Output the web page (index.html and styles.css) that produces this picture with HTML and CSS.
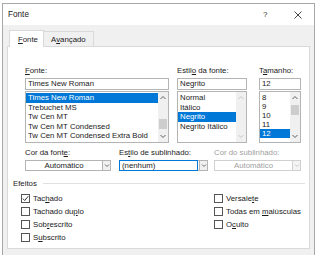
FILE: index.html
```html
<!DOCTYPE html>
<html>
<head>
<meta charset="utf-8">
<link rel="stylesheet" href="styles.css">
</head>
<body>
<div class="dialog">
  <div class="titlebar">
    <span class="title">Fonte</span>
    <span class="help">?</span>
    <svg class="close" width="8" height="8" viewBox="0 0 8 8"><path d="M0.5 0.5 L7.5 7.5 M7.5 0.5 L0.5 7.5" stroke="#333" stroke-width="0.9" fill="none"/></svg>
  </div>
  <div class="body">
    <div class="tabs">
      <div class="tab active"><u>F</u>onte</div>
      <div class="tab">A<u>v</u>ançado</div>
    </div>
    <div class="panel">
      <div class="row1">
        <div class="col col-font">
          <div class="label"><u>F</u>onte:</div>
          <div class="edit">Times New Roman</div>
          <div class="list">
            <div class="items">
              <div class="item sel">Times New Roman</div>
              <div class="item">Trebuchet MS</div>
              <div class="item">Tw Cen MT</div>
              <div class="item">Tw Cen MT Condensed</div>
              <div class="item">Tw Cen MT Condensed Extra Bold</div>
            </div>
            <div class="sbar">
              <svg class="arr" width="10" height="9" viewBox="0 0 10 9"><path d="M2.5 6 L5 3.5 L7.5 6" stroke="#606060" fill="none"/></svg>
              <span class="track"><span class="thumb thumb-font"></span></span>
              <svg class="arr" width="10" height="9" viewBox="0 0 10 9"><path d="M2.5 3 L5 5.5 L7.5 3" stroke="#606060" fill="none"/></svg>
            </div>
          </div>
        </div>
        <div class="col col-style">
          <div class="label">Estil<u>o</u> da fonte:</div>
          <div class="edit">Negrito</div>
          <div class="list">
            <div class="items">
              <div class="item">Normal</div>
              <div class="item">Itálico</div>
              <div class="item sel">Negrito</div>
              <div class="item">Negrito Itálico</div>
            </div>
            <div class="sbar">
              <svg class="arr" width="10" height="9" viewBox="0 0 10 9"><path d="M2.5 6 L5 3.5 L7.5 6" stroke="#c8c8c8" fill="none"/></svg>
              <span class="track"></span>
              <svg class="arr" width="10" height="9" viewBox="0 0 10 9"><path d="M2.5 3 L5 5.5 L7.5 3" stroke="#c8c8c8" fill="none"/></svg>
            </div>
          </div>
        </div>
        <div class="col col-size">
          <div class="label">T<u>a</u>manho:</div>
          <div class="edit">12</div>
          <div class="list">
            <div class="items tight">
              <div class="item">8</div>
              <div class="item">9</div>
              <div class="item">10</div>
              <div class="item">11</div>
              <div class="item sel">12</div>
            </div>
            <div class="sbar">
              <svg class="arr" width="10" height="9" viewBox="0 0 10 9"><path d="M2.5 6 L5 3.5 L7.5 6" stroke="#606060" fill="none"/></svg>
              <span class="track"><span class="thumb thumb-size"></span></span>
              <svg class="arr" width="10" height="9" viewBox="0 0 10 9"><path d="M2.5 3 L5 5.5 L7.5 3" stroke="#606060" fill="none"/></svg>
            </div>
          </div>
        </div>
      </div>
      <div class="row2">
        <div class="col2 c-color">
          <div class="label">Cor da font<u>e</u>:</div>
          <div class="combo">
            <span class="cval center">Automático</span>
            <span class="cbtn"><svg width="8" height="9" viewBox="0 0 8 9"><path d="M2 3.5 L4 5.5 L6 3.5" stroke="#707070" fill="none"/></svg></span>
          </div>
        </div>
        <div class="col2 c-under">
          <div class="label">Es<u>t</u>ilo de sublinhado:</div>
          <div class="combo focus">
            <span class="cval">(nenhum)</span>
            <span class="cbtn"><svg width="8" height="9" viewBox="0 0 8 9"><path d="M2 3.5 L4 5.5 L6 3.5" stroke="#707070" fill="none"/></svg></span>
          </div>
        </div>
        <div class="col2 c-ucolor disabled">
          <div class="label">Cor do sublinhado:</div>
          <div class="combo">
            <span class="cval center">Automático</span>
            <span class="cbtn"><svg width="8" height="9" viewBox="0 0 8 9"><path d="M2 3.5 L4 5.5 L6 3.5" stroke="#c8c8c8" fill="none"/></svg></span>
          </div>
        </div>
      </div>
      <div class="effects-head">
        <span>Efeitos</span>
        <span class="rule"></span>
      </div>
      <div class="effects">
        <div class="ecol ecol1">
          <div class="chk"><span class="box"><svg width="7" height="7" viewBox="0 0 7 7"><path d="M0.8 3.6 L2.7 5.5 L6.3 1.2" stroke="#333" stroke-width="1" fill="none"/></svg></span><span>Tac<u>h</u>ado</span></div>
          <div class="chk"><span class="box"></span><span>Tachado du<u>p</u>lo</span></div>
          <div class="chk"><span class="box"></span><span>Sob<u>r</u>escrito</span></div>
          <div class="chk"><span class="box"></span><span>S<u>u</u>bscrito</span></div>
        </div>
        <div class="ecol ecol2">
          <div class="chk"><span class="box"></span><span>Versale<u>t</u>e</span></div>
          <div class="chk"><span class="box"></span><span>Todas em <u>m</u>aiúsculas</span></div>
          <div class="chk"><span class="box"></span><span>O<u>c</u>ulto</span></div>
        </div>
      </div>
    </div>
  </div>
</div>
</body>
</html>
```
FILE: styles.css
```css
* { box-sizing: border-box; }
html, body { margin: 0; padding: 0; background: #ffffff; }
body {
  font-family: "Liberation Sans", Arial, sans-serif;
  font-size: 7.8px;
  color: #1a1a1a;
  width: 320px;
  height: 255px;
  overflow: hidden;
}
u { text-decoration: underline; text-underline-offset: 1px; }
svg { display: block; }
.dialog {
  margin: 3px 0 0 2px;
  width: 313px;
  height: 252px;
  border: 1px solid #a8a8a8;
  border-bottom: none;
  display: flex;
  flex-direction: column;
}
.titlebar {
  height: 21px;
  background: #ffffff;
  display: flex;
  align-items: center;
  padding: 0 0 0 5px;
}
.title { flex: 1; font-size: 8.2px; color: #222; }
.help { width: 10px; margin-right: 21px; color: #333; font-size: 8px; }
.close { margin-right: 12px; }
.body {
  flex: 1;
  background: #f0f0f0;
  padding: 5px 4px 6px 4px;
  display: flex;
  flex-direction: column;
}
.tabs { display: flex; align-items: flex-end; padding-left: 2px; }
.tab {
  height: 15px;
  padding: 0 7px;
  border: 1px solid #d9d9d9;
  border-bottom: none;
  display: flex;
  align-items: center;
  background: #f0f0f0;
}
.tab.active {
  height: 17px;
  background: #ffffff;
  padding: 0 0 0 8px;
  margin-bottom: -1px;
  position: relative;
  z-index: 1;
  width: 35px;
}
.tab + .tab { border-left: none; }
.panel {
  flex: 1;
  background: #ffffff;
  border: 1px solid #d9d9d9;
  padding: 19px 0 0 17px;
}
.row1 { display: flex; }
.col { display: flex; flex-direction: column; }
.col-font { width: 144px; margin-right: 8px; }
.col-style { width: 70px; margin-right: 12px; }
.col-size { width: 42px; }
.label { height: 10px; line-height: 10px; margin-bottom: 2px; white-space: nowrap; }
.edit {
  height: 12px;
  border: 1px solid #b4b4b4;
  line-height: 10px;
  padding-left: 2px;
  margin-bottom: 1px;
  white-space: nowrap;
}
.list {
  height: 52px;
  border: 1px solid #b4b4b4;
  display: flex;
}
.items { flex: 1; padding-top: 1px; overflow: hidden; }
.item { height: 9.5px; line-height: 9.5px; padding-left: 2px; white-space: nowrap; }
.items.tight .item { height: 9px; line-height: 9px; }
.item.sel { background: #0078d7; color: #ffffff; }
.sbar {
  width: 10px;
  flex: none;
  background: #f0f0f0;
  display: flex;
  flex-direction: column;
  align-items: center;
  padding: 1px 0;
}
.track { flex: 1; width: 100%; display: flex; flex-direction: column; align-items: center; }
.thumb { display: block; width: 8px; background: #cdcdcd; }
.thumb-font { height: 10px; margin-top: 17px; }
.thumb-size { height: 10px; margin-top: 3px; }
.row2 { display: flex; margin-top: 5px; }
.col2 { display: flex; flex-direction: column; }
.c-color { width: 86px; margin-right: 8px; }
.c-under { width: 89px; margin-right: 6px; }
.c-ucolor { width: 87px; }
.combo {
  height: 11px;
  display: flex;
  border: 1px solid #b4b4b4;
  line-height: 9px;
}
.cval { flex: 1; padding-left: 2px; white-space: nowrap; }
.cval.center { text-align: center; padding-left: 0; }
.cbtn {
  width: 8px;
  border-left: 1px solid #b4b4b4;
  background: #f0f0f0;
}
.combo.focus .cval { border: 1px solid #0078d7; margin: -1px 1px -1px -1px; padding-left: 2px; line-height: 9px; }
.disabled .label, .disabled .cval { color: #a0a0a0; }
.disabled .combo { border-color: #d0d0d0; }
.disabled .cbtn { border-left-color: #d0d0d0; background: #f4f4f4; }
.effects-head {
  display: flex;
  align-items: center;
  margin: 7px 0 0 -12px;
  height: 10px;
  padding-right: 4px;
}
.effects-head .rule { flex: 1; height: 1px; background: #e0e0e0; margin-left: 6px; }
.effects { display: flex; margin: 4px 0 0 -4px; }
.ecol { display: flex; flex-direction: column; }
.ecol1 { width: 193px; }
.chk { height: 13px; display: flex; align-items: center; white-space: nowrap; }
.box {
  width: 9px;
  height: 9px;
  border: 1px solid #555555;
  margin-right: 3px;
  background: #fff;
  display: flex;
  align-items: center;
  justify-content: center;
}
```
